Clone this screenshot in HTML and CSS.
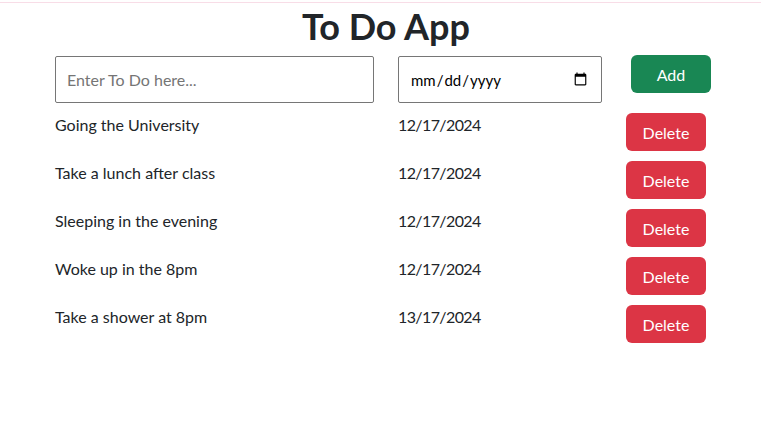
FILE: index.html
```html
<!DOCTYPE html>
<html lang="en">
<head>
<meta charset="utf-8">
<title>To Do App</title>
<link rel="stylesheet" href="styles.css">
</head>
<body>
<div class="topline"></div>
<h1 class="title">To Do App</h1>
<div class="app">
  <div class="form-row">
    <input class="field text-field" type="text" placeholder="Enter To Do here...">
    <input class="field date-field" type="date">
    <button class="btn btn-add">Add</button>
  </div>
  <div class="list">
    <div class="item"><span class="item-name">Going the University</span><span class="item-date">12/17/2024</span><button class="btn btn-delete">Delete</button></div>
    <div class="item"><span class="item-name">Take a lunch after class</span><span class="item-date">12/17/2024</span><button class="btn btn-delete">Delete</button></div>
    <div class="item"><span class="item-name">Sleeping in the evening</span><span class="item-date">12/17/2024</span><button class="btn btn-delete">Delete</button></div>
    <div class="item"><span class="item-name">Woke up in the 8pm</span><span class="item-date">12/17/2024</span><button class="btn btn-delete">Delete</button></div>
    <div class="item"><span class="item-name">Take a shower at 8pm</span><span class="item-date">13/17/2024</span><button class="btn btn-delete">Delete</button></div>
  </div>
</div>
</body>
</html>
```
FILE: styles.css
```css
* { box-sizing: border-box; }
html, body {
  margin: 0;
  background: #ffffff;
  color: #212529;
  font-family: "Lato", "Noto Sans", sans-serif;
  font-size: 16px;
}
.topline {
  margin-top: 2px;
  height: 1px;
  background: #f8dde7;
}
.title {
  margin: 2px 0 0;
  padding-left: 11px;
  text-align: center;
  font-size: 36px;
  font-weight: 700;
  line-height: 1.2;
}
.app {
  padding-left: 55px;
  margin-top: 7px;
}
.form-row {
  display: grid;
  grid-template-columns: 319px 204px 80px;
  column-gap: 24px;
  align-items: start;
}
.form-row .btn-add { margin-left: 5px; }
.field {
  height: 47px;
  border: 1px solid #767676;
  border-radius: 2px;
  padding: 0 11px;
  font-family: "Lato", "Noto Sans", sans-serif;
  font-size: 16px;
  color: #000;
  background: #fff;
  margin-top: 1px;
}
.date-field { font-size: 15px; }
.field::placeholder { color: #757575; }
.btn {
  height: 38px;
  width: 80px;
  border: none;
  border-radius: 6px;
  color: #fff;
  font-family: "Lato", "Noto Sans", sans-serif;
  font-size: 16px;
  padding: 0;
}
.btn-add { background: #198754; }
.btn-delete { background: #dc3545; }
.list {
  margin-top: 10px;
  display: flex;
  flex-direction: column;
  gap: 10px;
}
.item {
  display: grid;
  grid-template-columns: 343px 228px 80px;
  align-items: start;
}
.item-name, .item-date {
  line-height: 24px;
}
.item-date { letter-spacing: -0.6px; }
```
